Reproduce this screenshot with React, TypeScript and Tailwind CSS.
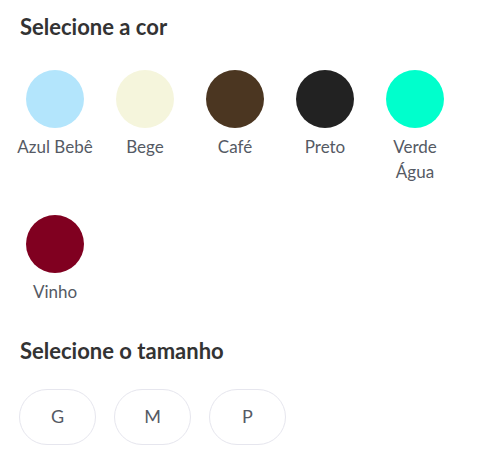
import React from "react";

const colors = [
  { name: "Azul Bebê", hex: "#b3e5fc" },
  { name: "Bege", hex: "#f5f5dc" },
  { name: "Café", hex: "#4b3621" },
  { name: "Preto", hex: "#222222" },
  { name: "Verde Água", hex: "#00ffcc" },
  { name: "Vinho", hex: "#800020" },
];

const sizes = ["G", "M", "P"];

export default function App() {
  return (
    <div
      className="w-[493px] h-[470px] bg-white pl-5 pt-[14px]"
      style={{ fontFamily: "Lato, 'Noto Sans', sans-serif" }}
    >
      <h2 className="text-[22px] font-bold leading-[1.2] text-[#333333]">Selecione a cor</h2>
      <div className="mt-[30px] flex flex-wrap gap-x-5 gap-y-[31px] w-[460px]">
        {colors.map((c) => (
          <div key={c.name} className="w-[70px] flex flex-col items-center">
            <div className="w-[58px] h-[58px] rounded-full" style={{ backgroundColor: c.hex }} />
            <div className="mt-[6px] w-[80px] shrink-0 text-[17px] leading-[25px] text-[#555a64] text-center">{c.name}</div>
          </div>
        ))}
      </div>
      <h2 className="mt-[34px] text-[22px] font-bold leading-[1.2] text-[#333333]">Selecione o tamanho</h2>
      <div className="mt-6 -ml-px flex gap-[18px]">
        {sizes.map((s) => (
          <div
            key={s}
            className="w-[77px] h-[56px] rounded-full border border-[#e6e6ee] flex items-center justify-center text-[18px] text-[#555a64]"
          >
            {s}
          </div>
        ))}
      </div>
    </div>
  );
}
